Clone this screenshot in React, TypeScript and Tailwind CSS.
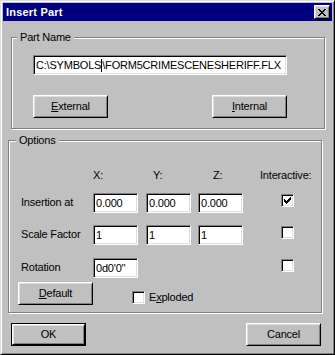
import React from "react";

function Raised({ children, className = "" }: { children?: React.ReactNode; className?: string }) {
  return (
    <div
      className={`flex items-center justify-center text-[11px] text-black bg-[#c0c0c0] border border-t-white border-l-white border-b-black border-r-black shadow-[inset_1px_1px_#dfdfdf,inset_-1px_-1px_#808080] ${className}`}
    >
      {children}
    </div>
  );
}

function Btn({ children }: { children: React.ReactNode }) {
  return <Raised className="w-[75px] h-[23px]">{children}</Raised>;
}

function Field({ value, className = "" }: { value: React.ReactNode; className?: string }) {
  return (
    <div
      className={`h-[20px] flex items-center pl-[2px] bg-white text-[11px] text-black whitespace-nowrap overflow-hidden border border-t-[#808080] border-l-[#808080] border-b-white border-r-white shadow-[inset_1px_1px_#000,inset_-1px_-1px_#dfdfdf] ${className}`}
    >
      {value}
    </div>
  );
}

function Check({ checked = false, className = "" }: { checked?: boolean; className?: string }) {
  return (
    <div
      className={`w-[13px] h-[13px] bg-white border border-t-[#808080] border-l-[#808080] border-b-white border-r-white shadow-[inset_1px_1px_#000,inset_-1px_-1px_#dfdfdf] flex items-center justify-center ${className}`}
    >
      {checked && (
        <svg width="7" height="7" viewBox="0 0 7 7" shapeRendering="crispEdges">
          <path
            d="M6 0h1v3h-1v1h-1v1h-1v1h-1v1h-1v-1h-1v-1h-1v-3h1v1h1v1h1v-1h1v-1h1z"
            fill="#000"
          />
        </svg>
      )}
    </div>
  );
}

export default function App() {
  return (
    <div className="font-['Liberation_Sans',Arial,sans-serif] text-[11px] tracking-[-0.2px] text-black">
      <div className="w-[335px] h-[355px] bg-[#c0c0c0] border border-t-[#dfdfdf] border-l-[#dfdfdf] border-b-black border-r-black shadow-[inset_1px_1px_#fff,inset_-1px_-1px_#808080] p-[2px] flex flex-col">
        {/* Title bar */}
        <div className="h-[18px] bg-[#000080] flex items-center justify-between pl-[3px] pr-[2px] shrink-0">
          <span className="text-white font-bold text-[11px] tracking-[0.2px] leading-[13px]">Insert Part</span>
          <Raised className="w-[16px] h-[14px]">
            <svg width="8" height="7" viewBox="0 0 8 7" shapeRendering="crispEdges">
              <path
                d="M0 0h2v1h1v1h2v-1h1v-1h2v1h-1v1h-1v1h-1v1h1v1h1v1h1v1h-2v-1h-1v-1h-2v1h-1v1h-2v-1h1v-1h1v-1h1v-1h-1v-1h-1v-1h-1z"
                fill="#000"
              />
            </svg>
          </Raised>
        </div>

        {/* Part Name group */}
        <div className="ml-[8px] mt-[16px] w-[314px] h-[92px] shrink-0 border border-[#808080] shadow-[inset_1px_1px_#fff,1px_1px_#fff]">
          <div className="-mt-[7px] ml-[5px] px-[3px] w-fit h-[13px] leading-[13px] bg-[#c0c0c0]">Part Name</div>
          <div className="ml-[21px] mt-[11px] w-[254px]">
            <Field
              className="w-[254px]"
              value={
                <>
                  <span>C:\SYMBOLS</span>
                  <span className="inline-block w-[1px] h-[13px] bg-black" />
                  <span>\FORM5CRIMESCENESHERIFF.FLX</span>
                </>
              }
            />
            <div className="mt-[20px] flex justify-between">
              <Btn>
                <span>
                  <u>E</u>xternal
                </span>
              </Btn>
              <Btn>
                <span>
                  <u>I</u>nternal
                </span>
              </Btn>
            </div>
          </div>
        </div>

        {/* Options group */}
        <div className="ml-[5px] mt-[11px] w-[314px] h-[173px] shrink-0 border border-[#808080] shadow-[inset_1px_1px_#fff,1px_1px_#fff]">
          <div className="-mt-[7px] ml-[7px] px-[3px] w-fit h-[13px] leading-[13px] bg-[#c0c0c0]">Options</div>

          <div className="mt-[22px] ml-[84px] flex h-[13px] leading-[13px]">
            <span className="w-[60px]">X:</span>
            <span className="w-[60px]">Y:</span>
            <span className="w-[47px]">Z:</span>
            <span>Interactive:</span>
          </div>

          <div className="mt-[11px] flex items-start h-[20px]">
            <span className="w-[84px] pl-[12px] leading-[18px]">Insertion at</span>
            <Field className="w-[45px]" value="0.000" />
            <Field className="w-[45px] ml-[8px]" value="0.000" />
            <Field className="w-[45px] ml-[7px]" value="0.000" />
            <Check checked className="ml-[38px] mt-[1px]" />
          </div>

          <div className="mt-[12px] flex items-start h-[20px]">
            <span className="w-[84px] pl-[12px] leading-[18px]">Scale Factor</span>
            <Field className="w-[45px]" value="1" />
            <Field className="w-[45px] ml-[8px]" value="1" />
            <Field className="w-[45px] ml-[7px]" value="1" />
            <Check className="ml-[38px] mt-[1px]" />
          </div>

          <div className="mt-[13px] flex items-start h-[20px]">
            <span className="w-[84px] pl-[12px] leading-[18px]">Rotation</span>
            <Field className="w-[45px]" value="0d0'0''" />
            <Check className="ml-[143px] mt-[1px]" />
          </div>

          <div className="mt-[4px] ml-[9px] flex items-start">
            <Btn>
              <span>
                <u>D</u>efault
              </span>
            </Btn>
            <Check className="ml-[39px] mt-[9px]" />
            <span className="ml-[4px] mt-[9px] leading-[13px]">
              E<u>x</u>ploded
            </span>
          </div>
        </div>

        {/* Bottom buttons */}
        <div className="mt-[10px] ml-[8px] w-[310px] flex justify-between shrink-0">
          <div className="w-[75px] h-[23px] border border-black">
            <Raised className="w-full h-full">OK</Raised>
          </div>
          <Btn>Cancel</Btn>
        </div>
      </div>
    </div>
  );
}
